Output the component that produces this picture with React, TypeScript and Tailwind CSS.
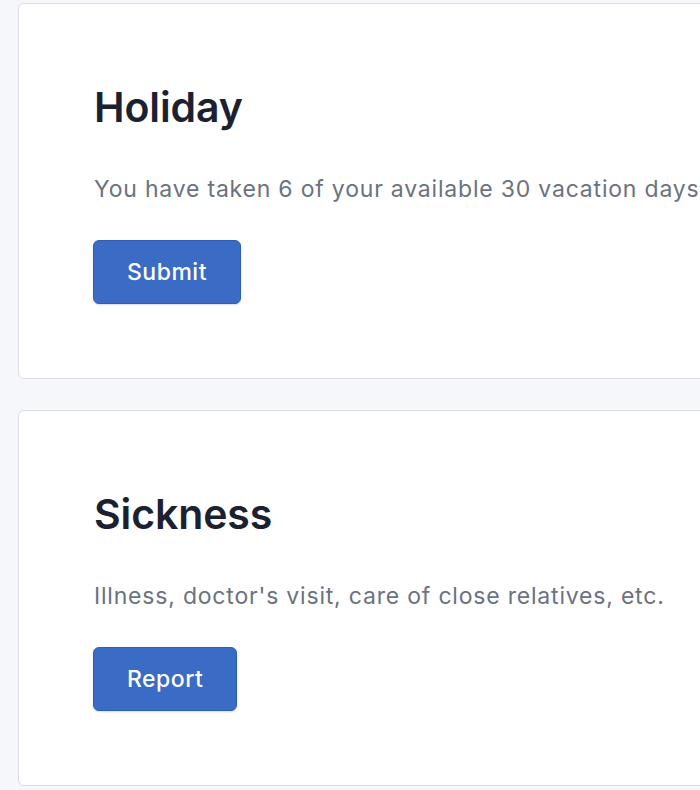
import React from "react";

function Card({ title, text, button }: { title: string; text: string; button: string }) {
  return (
    <div className="ml-[18px] w-[760px] shrink-0 rounded-[6px] border border-[#dcdde3] bg-white pl-[74px] pt-[79px] pb-[74px]">
      <h2 className="ml-[1px] text-[41px] leading-[48px] font-semibold text-[#1b2130] tracking-[-0.1px]">{title}</h2>
      <p className="ml-[1px] mt-[42px] text-[23px] leading-[32px] text-[#6b7280] tracking-[0.8px] whitespace-nowrap">{text}</p>
      <button className="mt-[35px] h-[64px] rounded-[6px] border border-[#2f5fb5] bg-[#3a6bc5] px-[33px] text-[23px] font-medium tracking-[0.5px] text-white shadow-[0_1px_2px_rgba(0,0,0,0.15)]">
        {button}
      </button>
    </div>
  );
}

export default function App() {
  return (
    <div
      className="min-h-[790px] w-[700px] overflow-hidden bg-[#f6f7fb] pt-[3px]"
      style={{ fontFamily: "Inter, 'Noto Sans', sans-serif" }}
    >
      <div className="flex flex-col gap-[31px]">
        <Card title="Holiday" text="You have taken 6 of your available 30 vacation days" button="Submit" />
        <Card title="Sickness" text="Illness, doctor's visit, care of close relatives, etc." button="Report" />
      </div>
    </div>
  );
}
